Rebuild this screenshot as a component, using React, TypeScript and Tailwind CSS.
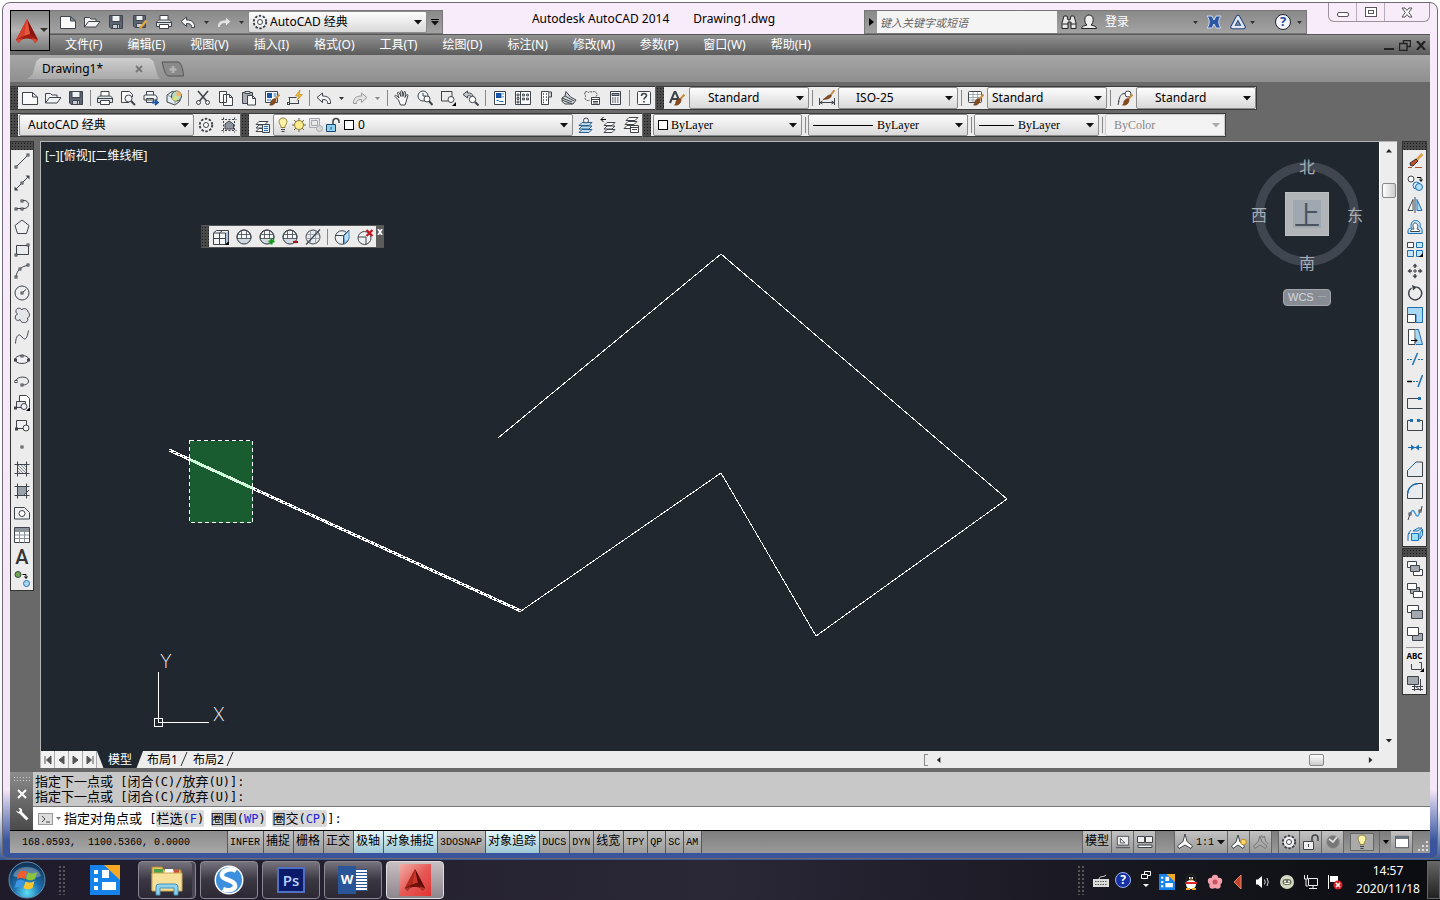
import type { ReactNode } from 'react';
import clsx from 'clsx';

const INK = '#3f444b';
const BLUE = '#1f6fb5';

function Ic({ children, size = 16, className }: { children: ReactNode; size?: number; className?: string }) {
  return (
    <svg width={size} height={size} viewBox="0 0 16 16" fill="none" stroke={INK} strokeWidth="1" className={clsx('shrink-0', className)} aria-hidden="true">
      {children}
    </svg>
  );
}

/* small square grip point used by the draw icons */
const P = ({ x, y }: { x: number; y: number }) => <rect x={x - 1} y={y - 1} width="2" height="2" fill="#fff" />;
const Corner = () => <path d="M16 12v4h-4z" fill="#000" stroke="none" />;
const Brush = () => (
  <g>
    <path d="M15.500 4.500L11 9.500" stroke="#c98d45" strokeWidth="2" />
    <path d="M11.500 9c1 1 .5 4-2 5.500-1.500 1-3 .5-4 .5 1.500-1 1-2 1.500-3.500s3-3.500 4.500-2.500z" fill="#8a4a1e" stroke="#5d3013" strokeWidth=".6" />
  </g>
);
const Globe = () => (
  <g>
    <circle cx="8" cy="8" r="7" fill="#f4f6f8" />
    <path d="M1 9a7 7 0 0 0 14 0z" fill="#d3d9e0" stroke="none" />
    <path d="M2 5.500h12M1 9.500h14M5.500 1.500v8M10.500 1.500v8" strokeWidth=".8" />
    <circle cx="8" cy="8" r="7" />
  </g>
);
const Sheets = () => (
  <path d="M5 4.500h9l-3 3H2zM5 8h9l-3 3H2zM5 11.500h9l-3 3H2z" fill="#fff" />
);

const icons: Record<string, ReactNode> = {
  new: <path d="M.5 2.500h10l5 4.500v7.500H.5zM10.500 2.500V7h5" fill="#fafafa" />,
  open: <path d="M.5 13V3.500h5l1.500 1.500h5v2M.5 13l4-5.500h11.500L12 13z" fill="#f2f3f4" />,
  save: (
    <g>
      <path d="M1.500 1.500h13v13H3l-1.500-1.500z" fill="#5b6573" />
      <path d="M4 1.500h8v6H4z" fill="#eef1f4" />
      <path d="M4.500 10.500h7v4h-7z" fill="#c9ced6" />
      <path d="M9.500 11v3" />
    </g>
  ),
  saveas: (
    <g>
      <path d="M1.500 1.500h12v12H3l-1.500-1.500z" fill="#5b6573" />
      <path d="M4 1.500h7v5H4z" fill="#eef1f4" />
      <path d="M4.500 9.500h6v4h-6z" fill="#c9ced6" />
      <path d="M14.500 6.500L8 14" stroke="#e6a83c" strokeWidth="2.500" />
    </g>
  ),
  print: (
    <g>
      <path d="M4 6V1.500h8V6" fill="#fff" />
      <path d="M2.500 6h11l2 2v4.500H.5V8z" fill="#dfe2e6" />
      <path d="M3.500 10.500h9v4h-9z" fill="#fff" />
      <path d="M1 8.500h14" />
    </g>
  ),
  preview: (
    <g>
      <path d="M9 12.500H1.500v-11h8l3 3V7" fill="#fafafa" />
      <circle cx="8.500" cy="8.500" r="3.500" fill="#f3f6f9" />
      <path d="M11 11l4 4" strokeWidth="2" />
    </g>
  ),
  publish: (
    <g>
      <path d="M3.500 5V1.500h7V5M1.500 5h11l1.500 2v3H1V6zM3.500 8.500h7v4h-7z" fill="#f3f4f5" />
      <path d="M9 12.500h5M12 10l2.800 2.500L12 15" stroke="#1857a5" strokeWidth="1.800" />
    </g>
  ),
  dwf: (
    <g>
      <path d="M1 5l5-3.500 8 2.500v7l-5 4-8-3z" fill="#e3ebf4" />
      <path d="M9 8.500L1 5M9 8.500V15" stroke="#8a94a0" />
      <circle cx="10.500" cy="6" r="5" fill="#b7dcc1" />
      <path d="M10.500 6V1a5 5 0 0 1 5 5z" fill="#f0b56a" stroke="none" />
      <path d="M10.500 6l-4.500 2a5 5 0 0 0 4.500 3z" fill="#e8e268" stroke="none" />
    </g>
  ),
  cut: (
    <g>
      <path d="M3 1l8.500 10M13 1L4.500 11" strokeWidth="1.600" />
      <circle cx="3.500" cy="12.500" r="2" />
      <circle cx="12.500" cy="12.500" r="2" />
    </g>
  ),
  copy: <path d="M1.500 1.500h7v11h-7zM5.500 4.500h6l3 3v8h-9zM11.500 4.500v3h3" fill="#fafafa" />,
  paste: (
    <g>
      <path d="M1.500 2.500h10v11h-10z" fill="#a9adb2" />
      <path d="M4 1.500h5v2H4z" fill="#eee" />
      <path d="M6.500 5.500h5l3 3v6.500h-8zM11.500 5.500v3h3" fill="#fafafa" />
    </g>
  ),
  match: (
    <g>
      <path d="M1.500 1.500h12v11h-12z" fill="#fff" />
      <path d="M3 3h5v5H3z" fill="#1857a5" stroke="none" />
      <path d="M9.500 4h3M9.500 6h3M3 10h4" stroke={BLUE} />
      <Brush />
    </g>
  ),
  block: (
    <g>
      <path d="M1.500 7.500h8M2.500 13.500h9M2.500 8v5M11.500 10v4" />
      <rect x=".5" y="12.500" width="2" height="2" fill="#fff" />
      <path d="M13 0L8.500 6H12l-2 4.500 5.500-6H12z" fill="#f7c33b" stroke="#b87a10" strokeWidth=".6" />
    </g>
  ),
  undo: <path d="M1 7.500L6.500 3v3C12 6 15 8.500 14.500 13.500h-3c.5-2.500-1-4-5-4v3z" fill="#f3f4f5" />,
  redo: <path d="M15 7.500L9.500 3v3C4 6 1 8.500 1.500 13.500h3c-.5-2.500 1-4 5-4v3z" fill="#e2e3e4" stroke="#999" />,
  pan: <path d="M4.500 10L1 6.500c-.5-1 .5-1.500 1.500-.8L5 8 3.500 3c0-1 1.300-1.200 1.700-.3L7 6.500l-.3-5c.2-1 1.500-1 1.700 0l.6 5 1-4.500c.4-1 1.700-.6 1.500.4L11 7.500l1.500-2.700c.6-.8 1.700-.2 1.400.7L12 12l-1 3H6.500z" fill="#fafafa" />,
  zoomrt: (
    <g>
      <circle cx="6" cy="6" r="5" fill="#f3f6f9" />
      <path d="M6 3v3h3" />
      <circle cx="10" cy="9" r="3" fill="#fff" />
      <path d="M12 11l3.500 4" strokeWidth="2" />
    </g>
  ),
  zoomwin: (
    <g>
      <path d="M1 1.500h11v6M1.500 1v10H8" />
      <circle cx="11" cy="9.500" r="3" fill="#fff" />
      <Corner />
    </g>
  ),
  zoomprev: (
    <g>
      <path d="M0 4.500L4.500 1v2c3-.2 5 .8 5.500 3l-2 .5C7 5.500 6 5.500 4.500 6v2z" fill="#c8ccd1" />
      <circle cx="9.500" cy="9.500" r="3.200" fill="#fff" />
      <path d="M12 12l3.500 3.500" strokeWidth="2" />
    </g>
  ),
  props: (
    <g>
      <path d="M2.500 1.500h11v13h-11z" fill="#fff" />
      <path d="M4 3h5.500v5H4z" fill="#1857a5" stroke="none" />
      <path d="M11 3v1.500M11 6v1.500M4.500 10.500h2l1 1h4" stroke={BLUE} />
    </g>
  ),
  dcenter: (
    <g>
      <path d="M.5 1.500h15v13H.5z" fill="#fff" />
      <path d="M5.500 2v12" />
      <path d="M2 4h2v2H2zM2 7.500h2v2H2zM2 11h2v2H2zM7.500 4h2v2h-2zM11.500 4h2v2h-2zM7.500 8h2v2h-2zM11.500 8h2v2h-2z" fill="#aab3bd" strokeWidth=".8" />
    </g>
  ),
  palette: (
    <g>
      <path d="M3.500 1.500h7v13h-7z" fill="#fff" />
      <path d="M10.500 2h3v5h-3" fill="#ccc" />
      <path d="M5 4h1M8 4h1M5 7h1M8 7h1M5 10h1M8 10h1M5 12.500h1" strokeWidth="1.500" />
    </g>
  ),
  sheetset: <path d="M1 8l3-2 1-4.500L9.500 7l5.500 3-3 4H4L1 11.500zM1 8l10 4M4 6l9 5M1 10l10 4" fill="#d5d9dd" />,
  markup: (
    <g>
      <path d="M1 2.500q2-2 3.500 0 2-2 3.500 0 2-2 4 0 2 2 0 4M1 2.500q-1 2 1 3.500-2 2 0 4 2 1 4 0" strokeDasharray="2 1" />
      <path d="M7.500 7.500h8v7h-8z" fill="#fff" />
      <path d="M7.500 9.500h8M9 11.500h5M9 13h5" />
    </g>
  ),
  calc: (
    <g>
      <path d="M3.500 1.500h10v13h-10z" fill="#f5f6f7" />
      <path d="M5 3.500h7v2H5z" fill="#9ba2aa" />
      <path d="M5 8h7M5 10h7M5 12h7" strokeDasharray="1.500 1" />
    </g>
  ),
  help: (
    <g>
      <rect x="1.500" y="1.500" width="13" height="13" rx="1" fill="#f7f8f9" />
      <path d="M5.500 6c0-3.500 5-3 5-.5 0 1.800-2.500 2-2.500 4M8 11v1.500" strokeWidth="1.600" />
    </g>
  ),
  gear: (
    <g>
      <circle cx="8" cy="8" r="6.200" strokeWidth="2" strokeDasharray="2.400 1.500" />
      <circle cx="8" cy="8" r="5.200" fill="#f0f1f2" stroke="none" />
      <circle cx="8" cy="8" r="2.500" fill="#fff" />
    </g>
  ),
  home: (
    <g>
      <path d="M.5 2.500h15M.5 13.500h15M2.500.5v15M13.500.5v15" strokeDasharray="2 1.500" />
      <path d="M4 12V7l4-3 4.500 3v5z" fill="#8d959e" />
    </g>
  ),
  textstyle: (
    <g>
      <path d="M1 13L5.500 2h1L10 10M3 9h6" strokeWidth="2" />
      <Brush />
    </g>
  ),
  dimstyle: (
    <g>
      <path d="M.5 8v7M15.500 8v7M1 12.500h14M3.500 11L1 12.500 3.500 14M12.500 11l2.500 1.500-2.500 1.500" />
      <path d="M15.500 0L11 6" stroke="#c98d45" strokeWidth="2" />
      <path d="M12 5c1 1.500-1 4.500-8 4.500 3-1.500 4.500-5 8-4.500z" fill="#8a4a1e" stroke="#5d3013" strokeWidth=".6" />
    </g>
  ),
  tablestyle: (
    <g>
      <rect x=".5" y="1.500" width="13" height="11" rx="1" fill="#fff" />
      <path d="M1 4.500h12.500M1 7.500h12.500M1 10h12.500M5 2v10M9.500 2v10" stroke="#8d97a2" strokeWidth=".8" />
      <Brush />
    </g>
  ),
  mlstyle: (
    <g>
      <path d="M1 15l1-4M1.500 12c1-6 3-9 7-8.500" />
      <circle cx="11" cy="4" r="3" fill="#fff" />
      <Brush />
    </g>
  ),
  layerprops: (
    <g>
      <Sheets />
      <path d="M8.500 7.500h7v8h-7z" fill="#e8eef5" />
      <path d="M10 9.500h4M10 11.500h4M10 13.500h4" stroke={BLUE} />
    </g>
  ),
  laycur: (
    <g>
      <path d="M5 5.500h10l-3 3H2zM5 9h10l-3 3H2zM5 12.500h10l-3 3H2z" fill="#bcdcf2" stroke="#2d5f8a" />
      <circle cx="9" cy="3.500" r="2.500" fill="#e8f3fb" />
    </g>
  ),
  layprev: (
    <g>
      <path d="M7 5.500h8l-3 3H4zM7 9h8l-3 3H4zM7 12.500h8l-3 3H4z" fill="#fff" />
      <path d="M1 2.500h5M3.500 0L1 2.500 3.500 5" stroke="#000" />
    </g>
  ),
  laystate: (
    <g>
      <path d="M6 .5h9l-3 3H3zM5 4.500h9l-3 3H2zM4 8.500h9l-3 3H1z" fill="#fff" />
      <path d="M7.500 8.500h8v7h-8z" fill="#fff" />
      <path d="M7.500 10.500h8M9 12.500h5" />
    </g>
  ),
  bulb: (
    <g>
      <path d="M8 1C4.500 1 3.500 4 4.500 6.500c.8 1.500 1.500 2 1.500 4h4c0-2 .7-2.500 1.500-4C12.500 4 11.500 1 8 1z" fill="#fdf3a4" stroke="#8a7d3b" />
      <path d="M6 12.500h4M6.500 14.500h3" />
    </g>
  ),
  sun: (
    <g>
      <path d="M8 1v14M1 8h14M3 3l10 10M13 3L3 13" stroke="#6c6440" />
      <circle cx="8" cy="8" r="4.500" fill="#fdeb8c" stroke="#8a7d3b" />
    </g>
  ),
  vpfreeze: (
    <g stroke="#a5a9ad">
      <path d="M1.500 1.500h10v9h-10zM3.500 3.500h6v5h-6z" fill="#e6e7e8" stroke="#a5a9ad" />
      <circle cx="11.500" cy="11.500" r="3" fill="#d5d7d9" stroke="#a5a9ad" />
    </g>
  ),
  lock: (
    <g>
      <path d="M8 8V4.500c0-4 6-4 6 0V6" strokeWidth="1.500" />
      <path d="M1.500 7.500h9v7h-9z" fill="#8fd0f0" stroke="#174a72" />
      <path d="M6 10v2.500" stroke="#174a72" />
    </g>
  ),
  // draw
  line: <g><path d="M2.500 13.500l11-11" /><P x={2} y={14} /><P x={14} y={2} /></g>,
  xline: <g><path d="M2 14L14 2" /><path d="M.5 11.500v4h4zM11.500.5h4v4z" fill={INK} stroke="none" /><P x={8} y={8} /></g>,
  pline: <g><path d="M1.500 11.500H10c6 0 6-8 0-8H8" /><P x={2} y={12} /><P x={8} y={12} /><P x={8} y={4} /></g>,
  polygon: <path d="M8 1l7 5.500-2.500 8h-9L1 6.500z" fill="#eef0f2" />,
  rect: <g><path d="M2.500 4.500h12v9h-12z" fill="#e9ecef" /><P x={2} y={14} /><P x={14} y={4} /></g>,
  arc: <g><path d="M2 14C2.500 8 7 3 14 2.500" /><P x={2} y={14} /><P x={6} y={6} /><P x={14} y={2} /></g>,
  circle: <g><circle cx="8" cy="8" r="7" fill="#eceef0" /><path d="M8 8l4-3.500" /><P x={8} y={8} /></g>,
  revcloud: <path d="M7.500 3C7 .5 2.500.5 2 3.500c-.3 2 .5 3 1.500 3.500C1 8 .5 12 2.500 13c1.500.8 3 .3 3.500-.5.500 3 4 3.500 5.500 3 2.500-1 2.500-3 2-4.500 2.500-1 2.500-5 .5-6C14 1.500 9 .5 7.500 3z" fill="#e4e7ea" />,
  spline: <path d="M1.500 14.500C2 6 5 4 8 8s5 2 6.500-6.500" />,
  ellipse: <g><ellipse cx="8" cy="8.500" rx="7" ry="4" fill="#eef0f2" /><P x={8} y={5} /><P x={1.500} y={9} /><P x={14.500} y={9} /></g>,
  ellarc: <g><path d="M1.500 8c2-5.500 13-5 13 0 0 3-3 4-6 4" /><P x={2} y={8.500} /><P x={8} y={12} /></g>,
  insert: (
    <g>
      <path d="M5.500 6V.5h7l3 3V12" fill="#fff" />
      <path d="M2.500 6.500h9v6h-9z" fill="#dfe2e6" />
      <circle cx="10" cy="11.500" r="3" fill="#eef0f2" />
      <P x={1.500} y={13} />
      <Corner />
    </g>
  ),
  mkblock: <g><path d="M2.500 3.500h10v8h-10z" fill="#eef0f2" /><circle cx="12" cy="11" r="3" fill="#eef0f2" /><P x={2.500} y={12} /></g>,
  point: <P x={8} y={8} />,
  hatch: <g><path d="M.5 3.500h15M.5 12.500h15M3.500.5v15M12.500.5v15" /><path d="M4 4l8 8M4 7l5 5M7 4l5 5M4 10l2 2M10 4l2 2" strokeWidth=".6" /></g>,
  gradient: <g><path d="M4 4h8.500v5L9 12.500H4z" fill="#9aa0a8" stroke="none" /><path d="M.5 3.500h15M.5 12.500h15M3.500.5v15M12.500.5v15M9 13l6-6" /></g>,
  region: <g><path d="M.5 2.500h10l5 5v6.500H.5z" fill="#eef0f2" /><circle cx="8" cy="8.500" r="3" fill="#fff" /></g>,
  table: <g><path d="M.5.5h15v15H.5z" fill="#fff" /><path d="M1 1h14v3H1z" fill="#8b929a" stroke="none" /><path d="M1 4.500h14M1 8h14M1 11.500h14M5.500 4.500v11M10.500 4.500v11" stroke="#8b929a" /></g>,
  addsel: (
    <g>
      <circle cx="4" cy="3.500" r="3" fill="#6aa84f" />
      <path d="M8.500 3.500H12V7M10.500 5.500L12 7.500l1.500-2" stroke="#000" />
      <circle cx="12.500" cy="12.500" r="3" fill="#a9d8f5" stroke={BLUE} />
    </g>
  ),
  // modify
  erase: (
    <g>
      <path d="M1 14.500h4M8 14.500h7" stroke="#b5502a" />
      <path d="M15.500 1L8 8.500" stroke="#d9a251" strokeWidth="3" />
      <path d="M9 6l2 2-5 5-2.500-.5-.5-2.500z" fill="#c0502c" stroke="#333" />
    </g>
  ),
  copyobj: (
    <g>
      <circle cx="4" cy="4" r="3" fill="#fff" />
      <path d="M10 2.500h4V6M12.500 4.500L14 6.500l1.500-2" stroke="#000" />
      <circle cx="9.500" cy="10.500" r="3.500" fill="#d9eefb" stroke={BLUE} />
      <circle cx="12" cy="12" r="3.500" fill="#b5def7" stroke={BLUE} />
    </g>
  ),
  mirror: <g><path d="M6 2.500v11H1z" fill="#fff" /><path d="M8 0v16" /><path d="M10 2.500v11h5z" fill="#a9d8f5" stroke={BLUE} /></g>,
  offset: <g><path d="M1 14.500v-3c0-2 2-2.500 3.500-2C3 5 5 1.500 8.500 1.500S14 4 13 8c2 .5 2.500 3 2 6.500z" fill="#c5e5f9" stroke={BLUE} /><path d="M3.500 12.500h9c0-2-1-2.500-2.500-2.500 2-4-.5-6-2-6S5 6 7 10c-2 0-3.500.5-3.500 2.500z" fill="#fff" /></g>,
  array: <g><path d="M.5 1.500h6v5h-6z" fill="#fff" /><path d="M9.500 1.500h6v5h-6zM.5 9.500h6v6h-6zM9.500 9.500h6v6h-6z" fill="#c5e5f9" stroke={BLUE} /><Corner /></g>,
  move: <g><path d="M8 2v3M8 11v3M2 8h3M11 8h3" strokeWidth="1.500" /><path d="M5.500 3.500L8 .500l2.500 3zM5.500 12.500L8 15.500l2.500-3zM3.500 5.500L.5 8l3 2.500zM12.500 5.500L15.500 8l-3 2.500z" fill={INK} stroke="none" /><path d="M7 7h2v2H7z" /></g>,
  rotate: <g><path d="M9.500 2A6.500 6.500 0 1 1 4.500 3" strokeWidth="1.500" /><path d="M5 0l5 2-4 3.500z" fill={INK} stroke="none" /></g>,
  scale: <g><path d="M.5.5h15v15H9V7.500H.5z" fill="#a9d8f5" stroke={BLUE} /><path d="M.5 7.500h8v8h-8z" fill="#fff" /></g>,
  stretch: <g><path d="M1.500.5H8v15H1.500z" fill="#fff" /><path d="M8.500.5h3l4 15H9" fill="#a9d8f5" stroke={BLUE} /><path d="M4 11.500h6M8 9.500l2 2-2 2" stroke="#000" /></g>,
  trim: <g><path d="M0 8.500h5M11 8.500h5" strokeDasharray="2 1" stroke={BLUE} /><path d="M10.500 2L5.500 14" stroke={BLUE} strokeWidth="1.500" /></g>,
  extend: <g><path d="M0 8.500h5" stroke="#000" strokeWidth="1.500" /><path d="M6 8.500h5" strokeDasharray="2 1" stroke={BLUE} /><path d="M15.500 2L11 14" stroke={BLUE} strokeWidth="1.500" /></g>,
  breakpt: <g><path d="M11 3.500H.5v10h15" /><path d="M11 2h3v3h-3z" fill={BLUE} stroke="none" /></g>,
  breakobj: <g><path d="M4 3.500H.5v10h15v-10H12" /><path d="M3 2h3v3H3zM10 2h3v3h-3z" fill={BLUE} stroke="none" /></g>,
  join: <g><path d="M1 8.500h14" stroke={BLUE} /><path d="M4 5.500l4 3-4 3zM12 5.500l-4 3 4 3z" fill={BLUE} stroke="none" /></g>,
  chamfer: <g><path d="M.5 9.500L9 1h6.500v14.500H.5z" fill="#e9ecef" /><path d="M.5 9.500L9 1" stroke={BLUE} /></g>,
  fillet: <g><path d="M.5 11C1 5 5 1 11 .5h4.500v15H.5z" fill="#e9ecef" /><path d="M.5 11C1 5 5 1 11 .5" stroke={BLUE} strokeWidth="1.500" /></g>,
  blend: <g><path d="M3 9c3-6 4-3 5.500 0s3.500 3 4.500-4" stroke="#4c9be0" strokeWidth="1.500" /><path d="M1 15l2-6M14 6l1-5" /><P x={3} y={9} /><P x={13} y={6} /></g>,
  explode: <g><path d="M1 7l3-4M6 4l5-3h4l-4 3zM13 6l2.500-4v6L13 12zM1 14V7.500L3 6" fill="#c5e5f9" stroke={BLUE} /><path d="M4.500 6.500h7v7h-7z" fill="#9be0fa" stroke={BLUE} /></g>,
  // draw order
  front: <g><path d="M.5 1.500h9v6h-9zM6.500 9.500h9v6h-9z" fill="#fff" /><path d="M3.500 5.500h9v6h-9z" fill="#a3a8ae" /></g>,
  back: <g><path d="M3.500 5.500h9v6h-9z" fill="#a3a8ae" /><path d="M.5 1.500h9v6h-9zM6.500 9.500h9v6h-9z" fill="#fff" /></g>,
  above: <g><path d="M.5 1.500h11v7H.5z" fill="#fff" /><path d="M4.500 6.500h11v8h-11z" fill="#a3a8ae" /></g>,
  under: <g><path d="M5.500 7.500h10v7h-10z" fill="#a3a8ae" /><path d="M.5 1.500h11v8H.5z" fill="#fff" /></g>,
  hatchback: <g><path d="M5 11.500h11M5 14.500h11M7.500 8v8M13.500 4v12M8 11l5 4" /><path d="M.5 1.500h11v8H.5z" fill="#a3a8ae" /></g>,
  // smooth mesh
  box: <g><path d="M.5 4l3-2.500h12V12l-3 3.500H.5zM.5 4H12.500v11.500M.5 9.500h12M6.500 4v11.500M6.500 4l3-2.500" fill="#f4f6f8" /><path d="M13 4l2-2v9.500l-2 3z" fill="#a9c4dc" stroke="none" /><Corner /></g>,
  smooth: <Globe />,
  more: <g><Globe /><path d="M12.500 9.500v6M9.500 12.500h6" stroke="#0a9a12" strokeWidth="2.200" /></g>,
  less: <g><Globe /><path d="M11 13h5" stroke="#a8121b" strokeWidth="2.200" /></g>,
  refine: <g><circle cx="8" cy="8" r="7" fill="#e6eaee" /><path d="M2 5.500h12M1 9.500h14M5.500 1.500v13M10.500 1.500v13" stroke="#8b959f" strokeWidth=".8" /><path d="M1 15.500L15 .5" strokeWidth="1.200" /></g>,
  crease: <g><circle cx="8" cy="8.500" r="6.800" fill="#eef0f2" /><path d="M1.500 6.500h8v8.500M9.500 6.500L15 1" /><path d="M10 7l5-5.500V10l-4.500 4z" fill="#bfe0f7" stroke={BLUE} strokeWidth=".7" /></g>,
  uncrease: <g><circle cx="7.500" cy="9" r="6.500" fill="#eef0f2" /><path d="M1 8h8v7.500" /><path d="M9.500 1l6 6M15.500 1l-6 6" stroke="#c4151c" strokeWidth="2.200" /></g>,
  // status
  layout: <g><path d="M1.500 1.500h13v10h-13zM0 14.500h16" fill="#eee" /><path d="M5 4v5h5z" fill="#fff" /></g>,
  quickview: <g><path d="M.5 2.500h7v6h-7zM8.500 2.500h7v6h-7zM1 11h14v2.500H1z" fill="#eee" /></g>,
  annot: <path d="M8 0l2 7.500 5.500 4.500-1.500 2.500L8 11l-6 3.500L.5 12 6 7.500z" fill="#fff" />,
  annotvis: <g><path d="M7 1l2 7 4.500 4-1.500 2.500L7 11l-5 3.500L.5 12 5 8z" fill="#fff" /><circle cx="12.500" cy="8" r="2.800" fill="#ffd76a" stroke="#c08a1c" /></g>,
  annotauto: <path d="M8.500 1l1 3 2-2 1 5 3 3M7 2l2 6 5 4-1.500 2.500L7 11l-5 3.500L.5 12 5 8z" fill="#aaa" stroke="#777" />,
  unlock: <g><path d="M9 7V4c0-4 6-4 6 0v3" strokeWidth="1.500" /><path d="M.5 7.500h10v8H.5z" fill="#eee" /><path d="M5.500 10v3" /></g>,
  perf: <g><circle cx="8" cy="8" r="6.500" fill="#777" stroke="#999" /><path d="M4 5l4 3 4-5" stroke="#ddd" strokeWidth="1.800" /></g>,
  clean: <g><path d="M.5 1.500h15v13H.5z" fill="#fff" /><path d="M1 2h14v2.500H1z" fill="#69727c" stroke="none" /></g>,
  binoc: <path d="M1 14.500V9l2-7h3l1 4h2l1-4h3l2 7v5.500h-5V8H7v6.500zM1.500 10H7M9.500 10H15" fill="#e8e8e8" stroke="#222" />,
  user: <path d="M.5 14.500c0-2.500 2.500-2.500 5.500-3.500C3 9 2.500 1 8 1s5 8 2 10c3 1 5.500 1 5.500 3.500z" fill="#eee" stroke="#222" />,
  exchange: <path d="M1 2h5l2 4 2-4h5c-3 4-3 8 0 12h-5l-2-4-2 4H1c3-4 3-8 0-12z" fill="#2c57a4" stroke="#cfdcf2" />,
  a360: <g><path d="M8 3l5.500 10h-11z" strokeWidth="4.500" stroke="#24457f" strokeLinejoin="round" /><path d="M8 3l5.500 10h-11z" strokeWidth="2.500" stroke="#dfe8f5" strokeLinejoin="round" /></g>,
};

const DotsV = 'bg-[#4a4a4a] bg-[radial-gradient(#1c1c1c_1px,transparent_1px)] bg-[length:3px_3px]';

function Tool({ name, label, className }: { name: string; label?: string; className?: string }) {
  return (
    <button type="button" aria-label={label ?? name} className={clsx('flex h-[22px] w-[23px] shrink-0 items-center justify-center', className)}>
      <Ic>{icons[name]}</Ic>
    </button>
  );
}

const Sep = () => <span className="mx-[2px] h-4 w-[2px] shrink-0 border-r border-[#888]" />;

const Caret = ({ light }: { light?: boolean }) => (
  <svg width="8" height="5" viewBox="0 0 8 5" className="shrink-0" aria-hidden="true">
    <path d="M0 0h8L4 4.500z" fill={light ? '#aaa' : '#111'} />
  </svg>
);

const SmallCaret = ({ fill = '#333' }: { fill?: string }) => (
  <svg width="5" height="3" viewBox="0 0 5 3" className="shrink-0" aria-hidden="true">
    <path d="M0 0h5L2.500 3z" fill={fill} />
  </svg>
);

function Combo({ label, value, className, selectClass, lead, disabled }: { label: string; value: string; className: string; selectClass?: string; lead?: ReactNode; disabled?: boolean }) {
  return (
    <label className={clsx('relative flex h-[22px] shrink-0 items-center rounded-xs border', disabled ? 'border-[#ccc] bg-[#f3f3f3] text-[#888]' : 'border-[#8d8d8d] bg-linear-to-b from-[#fdfdfd] to-[#d9d9d9] text-black', className)}>
      {lead}
      <select aria-label={label} disabled={disabled} className={clsx('h-full min-w-0 flex-1 appearance-none bg-transparent pr-4 outline-none', selectClass)}>
        <option>{value}</option>
      </select>
      <span className="pointer-events-none absolute right-1">
        <Caret light={disabled} />
      </span>
    </label>
  );
}

const Grip = () => <span className={clsx('h-full w-2 shrink-0', DotsV)} />;

const serif = 'font-["Liberation_Serif",serif] text-xs';

function AppLogo({ size = 26, dark }: { size?: number; dark?: boolean }) {
  return (
    <svg width={size} height={size} viewBox="0 0 26 26" aria-hidden="true">
      <path d="M13 1L2 22l3 3 2-3c2-2 9-2 12 0l2 3 3-3z" fill={dark ? '#8f1a12' : '#b9281a'} />
      <path d="M13 1L2 22l8-4z" fill={dark ? '#b3291d' : '#d9402b'} />
      <path d="M13 1l11 21-8-6z" fill={dark ? '#5c0d0b' : '#86140e'} />
      <path d="M13 1l3 15-6 2z" fill={dark ? '#c93a2c' : '#e8563f'} />
      <path d="M2 22l8-4 6-2 8 6-5-1c-4-1-9-1-12 1z" fill={dark ? '#6d110c' : '#a01c12'} />
      <path d="M2 22l3 3 2-3 2-2zM24 22l-3 3-2-3-1-2z" fill={dark ? '#a8392c' : '#d84b36'} />
    </svg>
  );
}

const menus = ['文件(F)', '编辑(E)', '视图(V)', '插入(I)', '格式(O)', '工具(T)', '绘图(D)', '标注(N)', '修改(M)', '参数(P)', '窗口(W)', '帮助(H)'];

function TitleBar() {
  return (
    <header className="grid shrink-0 grid-cols-[40px_1fr] grid-rows-[31px_21px]">
      <div className="row-span-2 flex flex-col bg-linear-to-b from-transparent from-50% to-[#6d6d6d] to-50% pt-[7px]">
        <button type="button" aria-label="应用程序菜单" className="flex h-[41px] items-center border border-black bg-linear-to-b from-[#858585] via-[#b4b4b4] to-[#7a7a7a] pl-[3px]">
          <AppLogo />
          <svg width="8" height="5" viewBox="0 0 8 5" aria-hidden="true">
            <path d="M0 0h8L4 4z" fill="#333" />
          </svg>
        </button>
      </div>
      <div className="flex min-w-0 items-end">
        <div className="flex h-6 w-[393px] shrink-0 items-center border border-l-0 border-[#777] bg-linear-to-b from-[#8a8a8a] to-[#a2a2a2] pl-[6px]">
          {['new', 'open', 'save', 'saveas', 'print', 'undo'].map((n) => (
            <Tool key={n} name={n} className="mr-px" />
          ))}
          <span className="flex w-3 justify-center"><SmallCaret /></span>
          <Tool name="redo" />
          <span className="flex w-[13px] justify-center"><SmallCaret /></span>
          <Combo label="工作空间" value="AutoCAD 经典" className="w-[179px] text-xs" lead={<Ic className="ml-[3px]">{icons.gear}</Ic>} selectClass="pl-[2px]" />
          <button type="button" aria-label="自定义" className="flex flex-1 flex-col items-center gap-px">
            <span className="h-px w-2 bg-black" />
            <Caret />
          </button>
        </div>
        <h1 className="flex h-[31px] min-w-0 flex-1 items-center justify-center gap-6 text-xs whitespace-pre text-black">
          <span>Autodesk AutoCAD 2014</span>
          <span>Drawing1.dwg</span>
        </h1>
        <div className="flex h-6 w-[443px] shrink-0 items-center border border-[#777] bg-linear-to-b from-[#8a8a8a] to-[#a2a2a2]">
          <button type="button" aria-label="展开" className="flex w-3 justify-center">
            <svg width="5" height="8" viewBox="0 0 5 8" aria-hidden="true"><path d="M0 0v8l5-4z" /></svg>
          </button>
          <input aria-label="搜索" placeholder="键入关键字或短语" className="h-full w-[180px] bg-[#f4f4f4] pl-[3px] text-[11px] text-black italic outline-none placeholder:text-[#666]" />
          <button type="button" aria-label="查找" className="flex w-6 justify-center"><Ic>{icons.binoc}</Ic></button>
          <button type="button" className="flex flex-1 items-center gap-2 text-xs text-white">
            <Ic>{icons.user}</Ic>
            登录
          </button>
          <SmallCaret />
          <button type="button" aria-label="Exchange" className="ml-2"><Ic>{icons.exchange}</Ic></button>
          <button type="button" aria-label="保持连接" className="ml-2 flex items-center gap-1">
            <Ic>{icons.a360}</Ic>
            <SmallCaret />
          </button>
          <button type="button" aria-label="帮助" className="mr-1 ml-5 flex items-center gap-[6px]">
            <span className="flex size-4 items-center justify-center rounded-full border border-[#223] bg-[#f3f6fc] text-[13px] font-bold text-[#1b4aa0]">?</span>
            <SmallCaret />
          </button>
        </div>
        <div className="ml-[21px] flex h-[19px] w-[102px] shrink-0 self-start rounded-b-md border border-t-0 border-[#9a939c] *:flex *:items-center *:justify-center">
          <button type="button" aria-label="最小化" className="w-7 border-r border-[#b5adb7]">
            <span className="mt-1 h-[5px] w-3 rounded-xs border border-[#555] bg-white" />
          </button>
          <button type="button" aria-label="还原" className="w-7 border-r border-[#b5adb7]">
            <span className="flex h-[10px] w-3 items-center justify-center border border-[#555] bg-white"><span className="h-1 w-[6px] border border-[#555]" /></span>
          </button>
          <button type="button" aria-label="关闭" className="flex-1">
            <svg width="12" height="11" viewBox="0 0 12 11" aria-hidden="true">
              <path d="M1 1h3l2 2.500L8 1h3L7.800 5.500 11 10H8L6 7.500 4 10H1l3.200-4.500z" fill="#fff" stroke="#555" />
            </svg>
          </button>
        </div>
      </div>
      <nav className="flex min-w-0 items-center gap-px border-t border-[#555] bg-linear-to-b from-[#919191] to-[#5b5b5b] pl-[3px] text-xs text-white">
        {menus.map((m) => (
          <button type="button" key={m} className="shrink-0 px-3">{m}</button>
        ))}
        <div className="mr-1 ml-auto flex items-center gap-[5px]">
          <button type="button" aria-label="最小化图形" className="mt-2 h-[2px] w-[10px] bg-[#222]" />
          <button type="button" aria-label="还原图形"><svg width="12" height="11" viewBox="0 0 12 11" fill="none" stroke="#222" aria-hidden="true"><path d="M4.500 3.500v-3h7v6H8M.5 3.500H8v7H.5z" strokeWidth="1.400" /></svg></button>
          <button type="button" aria-label="关闭图形"><svg width="10" height="9" viewBox="0 0 10 9" aria-hidden="true"><path d="M1 0l8 9M9 0L1 9" stroke="#222" strokeWidth="2.200" /></svg></button>
        </div>
      </nav>
    </header>
  );
}

function FileTabs() {
  return (
    <div className="flex h-[27px] shrink-0 items-center bg-linear-to-b from-[#a6a6a6] to-[#8f8f8f] pl-[17px]">
      <div className="flex h-[21px] w-[133px] items-center justify-between bg-linear-to-b from-[#cfcfcf] to-[#a9a9a9] pr-[17px] pl-[15px] [clip-path:polygon(0_100%,4%_80%,7%_15%,10%_0,92%_0,95%_15%,98%_80%,100%_100%)]">
        <span className="text-xs text-black">Drawing1*</span>
        <button type="button" aria-label="关闭"><svg width="8" height="8" viewBox="0 0 8 8" aria-hidden="true"><path d="M1 1l6 6M7 1L1 7" stroke="#777" strokeWidth="1.800" /></svg></button>
      </div>
      <button type="button" aria-label="新图形" className="ml-px">
        <svg width="24" height="16" viewBox="0 0 24 16" aria-hidden="true">
          <path d="M1 1h16c3 0 5 7 5.500 14H8C4 15 3 8 1 1z" fill="#8a8a8a" stroke="#555" />
          <path d="M12 5v7M8.500 8.500h7" stroke="#b4b4b4" strokeWidth="2.500" />
        </svg>
      </button>
    </div>
  );
}

const bar = 'flex h-6 shrink-0 items-center border-y border-[#3a3a3a] bg-[#ececec]';
const standardTools = ['new', 'open', 'save', '|', 'print', 'preview', 'publish', 'dwf', '|', 'cut', 'copy', 'paste', 'match', 'block', '|', 'undo', 'v', 'redo', 'w', '|', 'pan', 'zoomrt', 'zoomwin', 'zoomprev', '|', 'props', 'dcenter', 'palette', 'sheetset', 'markup', 'calc', '|', 'help'];

function Toolbars() {
  return (
    <div className="flex shrink-0 flex-col gap-[3px] bg-[#696969] pt-1 pb-[3px]">
      <div className="flex">
        <div className={bar}>
          <Grip />
          {standardTools.map((n, i) => {
            if (n === '|') return <Sep key={i} />;
            if (n === 'v' || n === 'w') return <span key={i} className="flex w-[13px] justify-center"><SmallCaret fill={n === 'v' ? '#333' : '#888'} /></span>;
            return <Tool key={i} name={n} />;
          })}
        </div>
        <div className={clsx(bar, 'ml-px border-r text-xs')}>
          <Grip />
          <Tool name="textstyle" className="mx-px" />
          <Combo label="文字样式" value="Standard" className="w-[120px]" selectClass="pl-[18px]" />
          <Sep />
          <Tool name="dimstyle" />
          <Combo label="标注样式" value="ISO-25" className="w-[120px]" selectClass="pl-[17px]" />
          <Sep />
          <Tool name="tablestyle" />
          <Combo label="表格样式" value="Standard" className="w-[120px]" selectClass="pl-1" />
          <Sep />
          <Tool name="mlstyle" />
          <Combo label="多重引线样式" value="Standard" className="w-[120px]" selectClass="pl-[18px]" />
        </div>
      </div>
      <div className="flex">
        <div className={bar}>
          <Grip />
          <Combo label="工作空间设置" value="AutoCAD 经典" className="ml-px w-[175px] text-xs" selectClass="pl-2" />
          <Tool name="gear" />
          <Tool name="home" />
        </div>
        <div className={clsx(bar, 'ml-px')}>
          <Grip />
          <Tool name="layerprops" className="ml-px" />
          <Combo
            label="图层"
            value="0"
            className="w-[300px] text-xs"
            selectClass="pl-1"
            lead={
              <span className="flex items-center pl-px">
                <Ic>{icons.bulb}</Ic>
                <Ic>{icons.sun}</Ic>
                <Ic className="ml-px">{icons.vpfreeze}</Ic>
                <Ic className="ml-px">{icons.lock}</Ic>
                <span className="ml-[3px] size-[10px] border border-black bg-white" />
              </span>
            }
          />
          <Tool name="laycur" />
          <Tool name="layprev" />
          <Tool name="laystate" />
        </div>
        <div className={clsx(bar, 'ml-px border-r')}>
          <Grip />
          <Combo label="颜色" value="ByLayer" className={clsx('ml-[2px] w-[149px]', serif)} selectClass="pl-[3px]" lead={<span className="ml-1 size-[10px] border border-black bg-white" />} />
          <Sep />
          <Combo label="线型" value="ByLayer" className={clsx('w-[160px]', serif)} selectClass="pl-1" lead={<span className="ml-1 h-px w-[60px] bg-black" />} />
          <Sep />
          <Combo label="线宽" value="ByLayer" className={clsx('w-[125px]', serif)} selectClass="pl-1" lead={<span className="ml-1 h-px w-[35px] bg-black" />} />
          <Sep />
          <Combo label="打印样式" value="ByColor" className={clsx('w-[120px]', serif)} selectClass="pl-2" disabled />
        </div>
      </div>
    </div>
  );
}

function SideBar({ names }: { names: string[] }) {
  return (
    <div className="flex w-[25px] flex-col items-center border border-[#333] bg-[#ececec]">
      <span className={clsx('h-2 w-full', DotsV)} />
      {names.map((n, i) => (n === '|' ? <span key={i} className="my-[2px] h-px w-[18px] bg-[#999]" /> : n === 'abc' ? (
        <button key={i} type="button" aria-label="文字置于前" className="relative flex h-[22px] w-[23px] justify-center pt-px text-[8px] leading-[10px] font-bold text-black">
          ABC
          <svg width="14" height="10" viewBox="0 0 14 10" className="absolute right-[2px] bottom-0" fill="none" stroke="#3f444b" aria-hidden="true">
            <path d="M1.500 2v5.500h10V.5H9" />
            <path d="M14 6v4h-4z" fill="#000" stroke="none" />
          </svg>
        </button>
      ) : <Tool key={i} name={n} />))}
    </div>
  );
}

const drawTools = ['line', 'xline', 'pline', 'polygon', 'rect', 'arc', 'circle', 'revcloud', 'spline', 'ellipse', 'ellarc', 'insert', 'mkblock', 'point', 'hatch', 'gradient', 'region', 'table'];
const modifyTools = ['erase', 'copyobj', 'mirror', 'offset', 'array', 'move', 'rotate', 'scale', 'stretch', 'trim', 'extend', 'breakpt', 'breakobj', 'join', 'chamfer', 'fillet', 'blend', 'explode'];

function Viewport() {
  return (
    <div className="relative min-w-0 flex-1 overflow-hidden bg-[#20272f]">
      <p className="absolute top-[6px] left-1 text-xs text-white">[−][俯视][二维线框]</p>

      <svg className="absolute inset-0 h-full w-full" fill="none" stroke="#fff" shapeRendering="crispEdges" aria-hidden="true">
        <path d="M457 296L680 112l286 245-191 137-95-163-200 138" />
        <rect x="148.500" y="298.500" width="63" height="82" fill="#195c30" strokeDasharray="4 3" />
        <path d="M128 308l352 161" strokeWidth="3" />
        <path d="M128 308l352 161" stroke="#20272f" strokeDasharray="2 3" />
        <path d="M149 317.500l63 29" stroke="#c6ffd2" strokeWidth="2" />
        <path d="M117.500 530v50H168M113.500 576.500h8v8h-8z" />
      </svg>
      <span className="absolute top-[509px] left-[119px] font-['Inter',sans-serif] text-[18px] leading-[22px] font-extralight text-white">Y</span>
      <span className="absolute top-[562px] left-[172px] font-['Inter',sans-serif] text-[18px] leading-[22px] font-extralight text-white">X</span>

      {/* smooth mesh palette */}
      <div className="absolute top-[83px] left-[160px] flex h-[23px] border-y border-[#555] bg-[#ececec]">
        <Grip />
        {['box', 'smooth', 'more', 'less', 'refine'].map((n) => <Tool key={n} name={n} />)}
        <span className="flex items-center"><Sep /></span>
        <Tool name="crease" />
        <Tool name="uncrease" />
        <button type="button" aria-label="关闭" className="flex w-2 justify-center bg-[#5c5c5c] pt-[3px]">
          <svg width="6" height="6" viewBox="0 0 6 6" aria-hidden="true"><path d="M1 0l4 6M5 0L1 6" stroke="#fff" strokeWidth="1.600" /></svg>
        </button>
      </div>

      {/* view cube */}
      <div className="absolute top-[14px] right-[15px] grid w-[114px] grid-cols-[18px_1fr_18px] grid-rows-[20px_76px_20px] place-items-center font-['Noto_Sans_CJK_SC',sans-serif] text-base leading-5 text-[#a8adb5]">
        <span className="absolute top-[6px] left-[5px] size-[104px] rounded-full border-[9px] border-[#40464f]" />
        <span className="relative col-start-2">北</span>
        <span className="relative col-start-1">西</span>
        <button type="button" className="relative flex size-11 items-center justify-center border border-[#bcbfc2] bg-[#b2b5b8] text-[#4a525c]">
          <span className="flex size-7 items-center justify-center bg-[#9fa8b0] text-[26px] leading-7">上</span>
        </button>
        <span className="relative">东</span>
        <span className="relative col-start-2">南</span>
      </div>
      <button type="button" className="absolute top-[147px] right-[48px] flex h-[17px] w-12 items-center justify-between rounded border border-[#a3a7ad] bg-[#878c94] px-1 font-['Liberation_Sans',sans-serif] text-[11px] text-[#d5d8dc]">
        WCS
        <span className="h-[3px] w-2 border-t border-[#a5a8ad]" />
      </button>
    </div>
  );
}

const arrow = { up: 'M0 4h7L3.500 0z', down: 'M0 0h7L3.500 4z', left: 'M4 0v7L0 3.500z', right: 'M0 0v7l4-3.500z' };
const Tri = ({ dir }: { dir: keyof typeof arrow }) => (
  <svg width="7" height="7" viewBox="-1 -1 8 8" aria-hidden="true"><path d={arrow[dir]} fill="#222" /></svg>
);

const TabEdge = () => <svg width="11" height="16" viewBox="0 0 11 16" aria-hidden="true"><path d="M3 15L9 1" stroke="#333" /></svg>;

function LayoutTabs() {
  return (
    <div className="flex h-[17px] shrink-0 items-stretch bg-[#ededed] text-xs leading-4 text-black">
      {['M3 1v8M9 1L4.500 5 9 9z', 'M8 1L3 5l5 4z', 'M3 1l5 4-5 4z', 'M9 1v8M3 1l4.500 4L3 9z'].map((d) => (
        <button type="button" key={d} aria-label="滚动布局" className="flex w-[14px] items-center justify-center border-r border-[#aaa] bg-[#f2f2f2]">
          <svg width="12" height="10" viewBox="0 0 12 10" aria-hidden="true"><path d={d} fill="#555" stroke="#555" /></svg>
        </button>
      ))}
      <button type="button" className="w-[46px] bg-[#20272f] text-white [clip-path:polygon(0_0,100%_0,86%_100%,14%_100%)]">模型</button>
      <button type="button" className="ml-1">布局1</button>
      <TabEdge />
      <button type="button" className="ml-1">布局2</button>
      <TabEdge />
      <div className="ml-auto flex w-[473px] items-center">
        <span className="h-3 w-1 border border-r-0 border-[#888]" />
        <button type="button" aria-label="向左" className="ml-2"><Tri dir="left" /></button>
        <span className="ml-auto h-3 w-[15px] rounded-xs border border-[#888] bg-linear-to-b from-white to-[#ccc]" />
        <button type="button" aria-label="向右" className="mr-[22px] ml-11"><Tri dir="right" /></button>
      </div>
    </div>
  );
}

function Workspace() {
  return (
    <main className="flex min-h-0 flex-1 bg-[#696969] pt-px pb-1">
      <aside className="flex w-[30px] shrink-0 flex-col items-start">
        <div className="flex w-6 flex-col items-center border border-[#333] bg-[#ececec]">
          <span className={clsx('h-2 w-full', DotsV)} />
          {drawTools.map((n) => <Tool key={n} name={n} />)}
          <button type="button" aria-label="多行文字" className="h-[22px] w-[22px] font-['Roboto',sans-serif] text-[20px] leading-[22px] font-medium text-[#333]">A</button>
          <Tool name="addsel" />
        </div>
      </aside>
      <section className="flex min-w-0 flex-1 flex-col border-t border-l border-[#b5b5b5]">
        <div className="flex min-h-0 flex-1">
          <Viewport />
          <div className="flex w-[18px] shrink-0 flex-col items-center border-l border-white bg-[#ededed] py-[6px]">
            <button type="button" aria-label="向上"><Tri dir="up" /></button>
            <span className="mt-7 h-[15px] w-[14px] rounded-xs border border-[#888] bg-linear-to-r from-white to-[#ccc]" />
            <button type="button" aria-label="向下" className="mt-auto"><Tri dir="down" /></button>
          </div>
        </div>
        <LayoutTabs />
      </section>
      <aside className="flex w-[33px] shrink-0 flex-col items-start gap-px pl-[5px]">
        <SideBar names={modifyTools} />
        <SideBar names={['front', 'back', 'above', 'under', '|', 'abc', 'hatchback']} />
      </aside>
    </main>
  );
}

/* Han characters run a pixel larger than the console face beside them */
function Mixed({ text }: { text: string }) {
  return (
    <>
      {text.split(/([\u4e00-\u9fff]+)/).map((t, i) => (
        <span key={i} className={i % 2 ? 'text-[13px]' : 'text-xs'}>{t}</span>
      ))}
    </>
  );
}

function CommandLine() {
  const opts = [['栏选', 'F'], ['圈围', 'WP'], ['圈交', 'CP']];
  return (
    <div className="flex h-[58px] shrink-0 font-['DejaVu_Sans_Mono','Noto_Sans_CJK_SC',monospace] text-black">
      <div className="flex w-[23px] shrink-0 flex-col items-center bg-linear-to-b from-[#8c8c8c] to-[#4a4a4a]">
        <span className="mt-1 h-[6px] w-[18px] bg-[radial-gradient(#ccc_1px,transparent_1px)] bg-[length:3px_3px]" />
        <button type="button" aria-label="关闭" className="mt-[7px]"><svg width="10" height="10" viewBox="0 0 10 10" aria-hidden="true"><path d="M1 1l8 8M9 1L1 9" stroke="#fff" strokeWidth="2" /></svg></button>
        <button type="button" aria-label="自定义" className="mt-2"><svg width="14" height="14" viewBox="0 0 14 14" aria-hidden="true"><path d="M5 5l7.500 7.500" stroke="#fff" strokeWidth="3" /><path d="M1 3.500l2.500 1.500L5 3.500 3.500 1C6 .5 8 2.500 7 5S2 7 1 3.500z" fill="#fff" /></svg></button>
      </div>
      <div className="flex min-w-0 flex-1 flex-col">
        <div className="h-[35px] border-b border-[#777] bg-[#c8c8c8] pt-px pl-[2px] leading-[15px] whitespace-pre">
          <p className="h-[15px]"><Mixed text="指定下一点或 [闭合(C)/放弃(U)]:" /></p>
          <p className="h-[15px]"><Mixed text="指定下一点或 [闭合(C)/放弃(U)]:" /></p>
        </div>
        <label className="flex flex-1 items-center bg-white pl-[5px] leading-4 whitespace-pre">
          <span className="flex h-3 w-[15px] items-center justify-center border border-[#999] bg-[#ddd]">
            <svg width="10" height="8" viewBox="0 0 10 8" fill="none" stroke="#444" aria-hidden="true"><path d="M1 1l3 3-3 3M5 7h4" /></svg>
          </span>
          <span className="px-[3px]"><SmallCaret fill="#777" /></span>
          <span>
            <Mixed text="指定对角点或 [" />
            {opts.map(([t, k], i) => (
              <span key={k}>
                {i > 0 && <span className="text-[11px]"> </span>}
                <button type="button" className="rounded-xs bg-[#d9d9d9]"><Mixed text={`${t}(`} /><span className="text-xs text-[#2323d8]">{k}</span><span className="text-xs">)</span></button>
              </span>
            ))}
            <span className="text-xs">]:</span>
          </span>
          <input aria-label="命令" className="min-w-0 flex-1 outline-none" />
        </label>
      </div>
    </div>
  );
}

const modes: [string, boolean][] = [['INFER', false], ['捕捉', false], ['栅格', false], ['正交', false], ['极轴', true], ['对象捕捉', true], ['3DOSNAP', false], ['对象追踪', true], ['DUCS', false], ['DYN', false], ['线宽', false], ['TPY', false], ['QP', false], ['SC', false], ['AM', false]];

const cell = 'flex h-full shrink-0 items-center justify-center border-r border-[#666] bg-linear-to-b from-[#c2c2c2] to-[#999]';

function StatusBar() {
  return (
    <footer className="flex h-[23px] shrink-0 items-center border-t border-black bg-linear-to-b from-[#7d7d7d] to-[#9a9a9a] font-['Liberation_Mono','Noto_Sans_CJK_SC',monospace] text-black">
      <output className="h-full w-[218px] shrink-0 border-r border-[#555] bg-linear-to-b from-[#8c8c8c] to-[#a8a8a8] pl-3 text-[10px] leading-[23px] whitespace-pre">168.0593,  1100.5360, 0.0000</output>
      {modes.map(([m, on]) => (
        <button
          type="button"
          key={m}
          aria-pressed={on}
          className={clsx('h-full shrink-0 border-r border-[#555] bg-linear-to-b pr-[3px] pl-[2px]', on ? 'from-[#e3f7fb] to-[#9dc6d4]' : 'from-[#c2c2c2] to-[#9b9b9b]', /[A-Z]/.test(m) ? 'text-[10px]' : 'text-xs')}
        >
          {m}
        </button>
      ))}
      <div className="ml-auto flex h-full shrink-0 items-center">
        <button type="button" className="h-full w-[30px] border-x border-[#666] bg-linear-to-b from-[#c2c2c2] to-[#999] text-xs">模型</button>
        <button type="button" aria-label="布局" className={clsx(cell, 'w-[22px]')}><Ic size={14}>{icons.layout}</Ic></button>
        <button type="button" aria-label="快速查看" className={clsx(cell, 'w-[22px]')}><Ic>{icons.quickview}</Ic></button>
        <button type="button" className={clsx(cell, 'ml-[18px] w-[54px] gap-[3px] border-l')}>
          <Ic>{icons.annot}</Ic>
          <span className="text-[10px]">1:1</span>
          <Caret />
        </button>
        <button type="button" aria-label="注释可见性" className={clsx(cell, 'w-[22px]')}><Ic>{icons.annotvis}</Ic></button>
        <button type="button" aria-label="自动缩放" className={clsx(cell, 'mr-[6px] w-[22px]')}><Ic>{icons.annotauto}</Ic></button>
        <button type="button" aria-label="切换工作空间" className={clsx(cell, 'w-[22px] border-l')}><Ic>{icons.gear}</Ic></button>
        <button type="button" aria-label="锁定" className={clsx(cell, 'w-[22px]')}><Ic>{icons.unlock}</Ic></button>
        <button type="button" aria-label="硬件加速" className={clsx(cell, 'w-[22px]')}><Ic>{icons.perf}</Ic></button>
        <button type="button" aria-label="隔离对象" className="flex h-full w-9 items-center justify-center border-r border-[#666]">
          <span className="flex h-[18px] w-6 items-center justify-center border border-[#666] bg-[#aaa]"><Ic>{icons.bulb}</Ic></span>
        </button>
        <span className="flex w-[11px] justify-center"><svg width="6" height="4" viewBox="0 0 6 4" aria-hidden="true"><path d="M0 0h6L3 4z" /></svg></span>
        <button type="button" aria-label="全屏显示" className={clsx(cell, 'w-[22px]')}><Ic size={14}>{icons.clean}</Ic></button>
        <svg width="17" height="22" viewBox="0 0 17 22" fill="#ddd" aria-hidden="true"><path d="M13 10h2v2h-2zM9 14h2v2H9zM13 14h2v2h-2zM5 18h2v2H5zM9 18h2v2H9zM13 18h2v2h-2z" /></svg>
      </div>
    </footer>
  );
}

function PanelIcon({ size }: { size: number }) {
  return (
    <svg width={size} height={size} viewBox="0 0 30 30" aria-hidden="true">
      <path d="M0 0h30v30H0z" fill="#1583ea" />
      <path d="M4 5h4v4H4zM4 13h4v4H4zM4 21h4v4H4zM12 5h7v8h-7zM12 17h14v8H12z" fill="#fff" />
      <path d="M14 0h16v15z" fill="#f7a823" />
    </svg>
  );
}

const task = 'flex h-[38px] w-[58px] shrink-0 items-center justify-center rounded-sm border border-[#8b8890] bg-linear-to-b from-[#77747f] via-[#3a3743] to-[#2c2935]';

function Taskbar() {
  return (
    <div className="flex h-10 shrink-0 items-center bg-linear-to-r from-[#1f1b2b] via-[#2a2737] to-[#0b0c10] font-['Noto_Sans','Noto_Sans_CJK_SC',sans-serif]">
      <button type="button" aria-label="开始" className="ml-2">
        <svg width="38" height="38" viewBox="0 0 38 38" aria-hidden="true">
          <defs>
            <radialGradient id="orb" cx=".5" cy=".85" r=".8">
              <stop offset="0" stopColor="#5fe0f5" />
              <stop offset=".45" stopColor="#1d70b0" />
              <stop offset="1" stopColor="#123458" />
            </radialGradient>
          </defs>
          <circle cx="19" cy="19" r="18" fill="url(#orb)" stroke="#5f8fb0" />
          <path d="M5 15C8 3 30 3 33 15c-8 3-20 3-28 0z" fill="#fff" opacity=".3" />
          <path d="M11 11c3-2 5-1.500 8 0l-2 7c-3-1.500-5-1.500-8 0z" fill="#ee5d2b" />
          <path d="M20 11.500c3 1.500 5 1.500 9-.5l-2 7c-4 2-6 1.500-9 0z" fill="#8cc43c" />
          <path d="M8.500 20c3-2 5-1.500 8 0l-2 7c-3-1.500-5-1.500-8 0z" fill="#3b97e3" />
          <path d="M17.500 20.500c3 1.500 5 1.500 9-.5l-2 7c-4 2-6 1.500-9 0z" fill="#fbc72f" />
        </svg>
      </button>
      <span className="ml-3 h-[30px] w-2 bg-[radial-gradient(#555_1px,transparent_1px)] bg-[length:4px_4px]" />
      <button type="button" aria-label="桌面整理" className="ml-6"><PanelIcon size={30} /></button>
      <div className="ml-[18px] flex gap-1">
        <button type="button" aria-label="资源管理器" className={clsx(task, 'shadow-[inset_-3px_0_0_#4a4753]')}>
          <svg width="34" height="32" viewBox="0 0 34 32" aria-hidden="true">
            <path d="M2 3h10l2 3h17v20H2z" fill="#e9c460" stroke="#a8893a" />
            <path d="M4 5h9v4H4z" fill="#4da04b" /><path d="M15 5h8v4h-8z" fill="#fff" /><path d="M24 6h5v3h-5z" fill="#d04b3a" />
            <path d="M2 9h30v18H2z" fill="#f6e09a" stroke="#c9a850" />
            <path d="M6 31v-8q0-3 3-3h16q3 0 3 3v8h-4v-7H10v7z" fill="#8fd4ef" stroke="#4b8fb5" />
          </svg>
        </button>
        <button type="button" aria-label="搜狗" className={task}>
          <svg width="30" height="30" viewBox="0 0 30 30" aria-hidden="true">
            <circle cx="15" cy="15" r="14.500" fill="#fff" />
            <circle cx="15" cy="15" r="13" fill="#3c8fdd" />
            <path d="M22 6C16 2 7 6 8 11c1 4 12 4 13 9 1 4-6 7-12 4" fill="none" stroke="#fff" strokeWidth="4.500" />
          </svg>
        </button>
        <button type="button" aria-label="Photoshop" className={task}>
          <span className="flex h-[26px] w-7 items-center justify-center border-2 border-[#4f6fc0] bg-[#0b1a6a] font-['Open_Sans',sans-serif] text-[15px] leading-4 font-semibold text-[#b9d4fb]">Ps</span>
        </button>
        <button type="button" aria-label="Word" className={task}>
          <span className="flex items-center">
            <span className="flex h-7 w-[18px] items-center justify-center bg-[#2a5699] text-[13px] font-bold text-white">W</span>
            <span className="h-[22px] w-3 border-y border-r border-[#2a5699] bg-white bg-[repeating-linear-gradient(#fff_0_2px,#2a5699_2px_3px)]" />
          </span>
        </button>
        <button type="button" aria-label="AutoCAD" className="flex h-[38px] w-[58px] items-center justify-center rounded-sm border border-[#ddd] bg-linear-to-b from-[#c9bfc3] to-[#8d868c]">
          <span className="flex size-8 items-center justify-center bg-linear-to-br from-[#f0b0ac] via-[#e65a58] to-[#e03030]"><AppLogo size={24} dark /></span>
        </button>
      </div>
      <div className="ml-auto flex items-center">
        <span className="h-[30px] w-2 bg-[radial-gradient(#555_1px,transparent_1px)] bg-[length:4px_4px]" />
        <div className="ml-2 flex items-center gap-[6px]">
          <svg width="16" height="16" viewBox="0 0 16 16" aria-hidden="true"><path d="M0 7h16v8H0z" fill="#ddd" /><path d="M2 9.500h12M2 12.500h12" stroke="#555" strokeDasharray="1.500 1" /><path d="M6 7c1-4 4-1 7-4" stroke="#ddd" fill="none" /></svg>
          <span className="flex size-4 items-center justify-center rounded-full border border-[#9fb4ea] bg-[#1630a5] text-xs font-bold text-white">?</span>
          <svg width="10" height="18" viewBox="0 0 10 18" className="ml-1" aria-hidden="true"><path d="M3.500 3.500v-3h6v4h-3M.5 3.500h6v4h-6z" fill="none" stroke="#fff" /><path d="M2 13h6l-3 3z" fill="#fff" /></svg>
        </div>
        <div className="mt-1 ml-2 flex items-center gap-2">
          <PanelIcon size={16} />
          <svg width="16" height="16" viewBox="0 0 16 16" aria-hidden="true"><circle cx="8" cy="5" r="4.500" fill="#111" stroke="#555" strokeWidth=".5" /><ellipse cx="8" cy="10.500" rx="5" ry="4.500" fill="#fff" /><path d="M2 8h12v2H2z" fill="#d8232a" /><path d="M6 5.500h4l-2 1.500zM3 14h4v2H3zM9 14h4v2H9z" fill="#f5a623" /><path d="M6 3h1.500v2H6zM8.500 3H10v2H8.500z" fill="#fff" /></svg>
          <svg width="16" height="16" viewBox="0 0 16 16" fill="#f3a0ab" aria-hidden="true"><circle cx="8" cy="4" r="3.200" /><circle cx="4" cy="7" r="3.200" /><circle cx="12" cy="7" r="3.200" /><circle cx="5.500" cy="11.500" r="3.200" /><circle cx="10.500" cy="11.500" r="3.200" /><circle cx="8" cy="8" r="2.500" fill="#c8525f" /></svg>
          <svg width="16" height="16" viewBox="0 0 16 16" aria-hidden="true"><path d="M10 1v14L3 8z" fill="#c0452c" stroke="#e38a70" /></svg>
          <svg width="16" height="16" viewBox="0 0 16 16" aria-hidden="true"><path d="M1 5.500h2L7 2v12l-4-3.500H1z" fill="#fff" /><path d="M9.500 5.500q1.500 2.500 0 5M12 4q2.500 4 0 8" stroke="#ddd" fill="none" /></svg>
          <svg width="16" height="16" viewBox="0 0 16 16" aria-hidden="true"><circle cx="8" cy="8" r="7" fill="#d5d8c3" /><rect x="3.500" y="5" width="9" height="6" rx="3" fill="#6d735c" /><path d="M5.500 9.500h5" stroke="#fff" /><circle cx="6" cy="7.500" r="1" fill="#fff" /><circle cx="10" cy="7.500" r="1" fill="#fff" /></svg>
          <svg width="16" height="16" viewBox="0 0 16 16" fill="none" stroke="#eee" aria-hidden="true"><path d="M5.500 4.500h9v7h-9zM6 14.500h8M10 12v2M1.500 1v4h3V1M3 5v7h2" /></svg>
          <svg width="16" height="16" viewBox="0 0 16 16" aria-hidden="true"><path d="M1.500 1v14" stroke="#fff" /><path d="M3 2h8v6H3z" fill="#fff" /><circle cx="11" cy="11" r="4.500" fill="#d8232a" /><path d="M9 9l4 4M13 9l-4 4" stroke="#fff" strokeWidth="1.500" /></svg>
        </div>
        <time className="ml-[11px] flex w-[68px] flex-col items-center text-xs leading-[18px] text-white">
          <span>14:57</span>
          <span>2020/11/18</span>
        </time>
        <button type="button" aria-label="显示桌面" className="ml-[5px] h-[38px] w-[13px] border border-[#666] bg-linear-to-b from-[#666] to-[#222]" />
      </div>
    </div>
  );
}

export default function App() {
  return (
    <div className="flex h-screen flex-col overflow-hidden bg-linear-to-b from-white via-[#f8f8fb] via-90% to-[#2b4c8c] to-96% font-['Noto_Sans','Noto_Sans_CJK_SC',sans-serif]">
      <div className="mx-[2px] mt-[2px] mb-px flex min-h-0 flex-1 flex-col rounded-t-lg rounded-b-md border border-[#6d6a73] bg-linear-to-b from-[#f8ecfa] via-[#f5e6f8] via-92% to-[#3a559c] to-98% px-[7px] pb-[5px]">
        <TitleBar />
        <FileTabs />
        <Toolbars />
        <Workspace />
        <CommandLine />
        <StatusBar />
      </div>
      <Taskbar />
    </div>
  );
}
